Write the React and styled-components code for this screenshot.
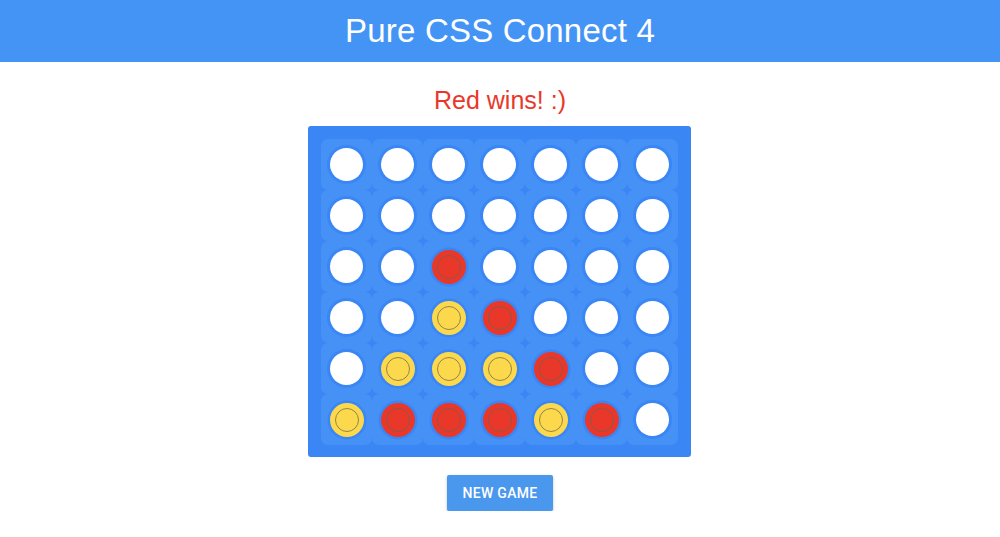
import React from "react";
import styled, { createGlobalStyle } from "styled-components";

const Global = createGlobalStyle`
  html, body { margin: 0; padding: 0; background: #fff; }
  body { font-family: "Liberation Sans", Arial, sans-serif; }
`;

const Page = styled.div`
  display: flex;
  flex-direction: column;
  align-items: center;
  width: 100%;
`;

const Header = styled.header`
  width: 100%;
  height: 62px;
  background: #4494f5;
  display: flex;
  align-items: center;
  justify-content: center;
`;

const Title = styled.h1`
  margin: 0;
  color: #fff;
  font-weight: 400;
  font-size: 33px;
  font-family: "Liberation Sans", Arial, sans-serif;
  letter-spacing: 0.2px;
`;

const Status = styled.div`
  margin-top: 24px;
  height: 28px;
  line-height: 28px;
  color: #e9372a;
  font-size: 25px;
  font-family: "Liberation Sans", Arial, sans-serif;
`;

const Board = styled.div`
  margin-top: 12px;
  margin-right: 1px;
  box-sizing: border-box;
  width: 383px;
  height: 331px;
  padding: 13px 13px 12px 13px;
  background: #3a86f5;
  border-radius: 3px;
  display: grid;
  grid-template-columns: repeat(7, 51px);
  grid-template-rows: repeat(6, 51px);
`;

const Cell = styled.div`
  background: #4691f6;
  border-radius: 7px;
  display: flex;
  align-items: center;
  justify-content: center;
`;

const colors = { w: "#ffffff", r: "#e9372a", y: "#fcd94c" };

const Disc = styled.div`
  width: ${(p) => (p.$c === "w" ? 33 : 34)}px;
  height: ${(p) => (p.$c === "w" ? 33 : 34)}px;
  border-radius: 50%;
  background: ${(p) => colors[p.$c]};
  box-shadow: 0 0 0 ${(p) => (p.$c === "w" ? 3 : 2.5)}px #3a86f5;
  display: flex;
  align-items: center;
  justify-content: center;
`;

const Ring = styled.div`
  width: 24px;
  height: 24px;
  border-radius: 50%;
  border: 1px solid rgba(110, 100, 80, 0.75);
  box-sizing: border-box;
`;

const Button = styled.button`
  margin-top: 18px;
  width: 106px;
  height: 36px;
  border: none;
  border-radius: 2px;
  background: #4a97ee;
  color: #fff;
  font-family: Roboto, "Liberation Sans", sans-serif;
  font-weight: 500;
  font-size: 14px;
  letter-spacing: 0.3px;
  box-shadow: 0 1px 3px rgba(0, 0, 0, 0.25);
  cursor: pointer;
`;

const grid = [
  "wwwwwww",
  "wwwwwww",
  "wwrwwww",
  "wwyrwww",
  "wyyyrww",
  "yrrryrw",
];

export default function App() {
  return (
    <Page>
      <Global />
      <Header>
        <Title>Pure CSS Connect 4</Title>
      </Header>
      <Status>Red wins! :)</Status>
      <Board>
        {grid.flatMap((row, r) =>
          row.split("").map((c, i) => (
            <Cell key={`${r}-${i}`}>
              <Disc $c={c}>{c !== "w" && <Ring />}</Disc>
            </Cell>
          ))
        )}
      </Board>
      <Button>NEW GAME</Button>
    </Page>
  );
}
